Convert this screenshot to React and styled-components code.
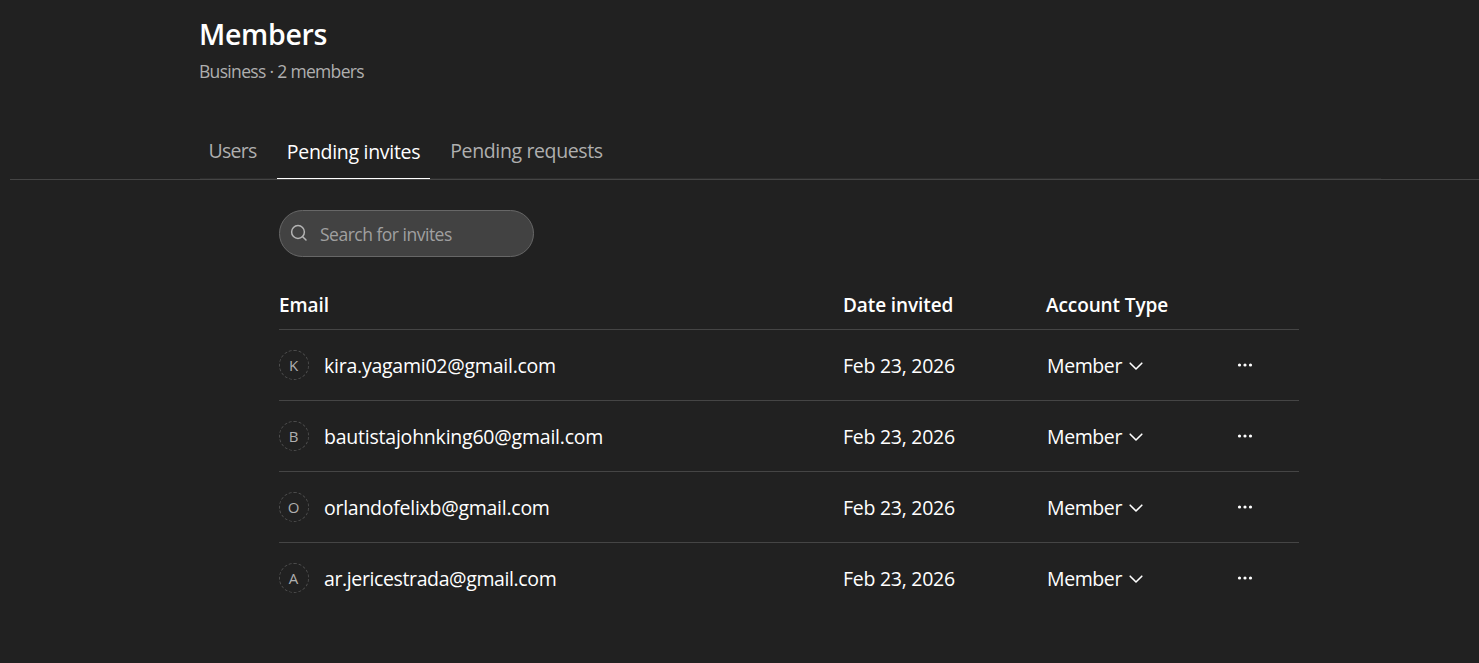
import React from 'react';
import styled, { createGlobalStyle } from 'styled-components';

const GlobalStyle = createGlobalStyle`
  body {
    margin: 0;
    background-color: #212121;
    color: #fff;
    font-family: 'Segoe UI', 'Open Sans', 'Noto Sans', sans-serif;
    font-size: 19.5px;
  }
  * {
    box-sizing: border-box;
  }
`;

const Page = styled.main`
  min-height: 663px;
  padding-left: 10px;
  background-color: #212121;
  overflow: hidden;
`;

const Header = styled.header`
  padding: 13px 0 0 189px;
`;

const Title = styled.h1`
  margin: 0;
  font-size: 28.5px;
  font-weight: 600;
  line-height: 42px;
  letter-spacing: -0.3px;
`;

const Subtitle = styled.p`
  margin: 4px 0 0;
  color: #afafaf;
  font-size: 17.5px;
  line-height: 24px;
  letter-spacing: -0.68px;
`;

const TabBar = styled.nav`
  margin-top: 42px;
  border-bottom: 1px solid #454545;
`;

const TabList = styled.div`
  display: flex;
  gap: 10px;
  width: 1181px;
  height: 54px;
  margin-left: 190px;
  border-bottom: 1px solid #2c2c2c;
`;

const Tab = styled.button`
  flex: none;
  width: ${({ $width }) => $width}px;
  height: 54px;
  padding: ${({ $active }) => ($active ? '0' : '0 2px 2px 0')};
  border: 0;
  border-bottom: 1px solid ${({ $active }) => ($active ? '#fff' : 'transparent')};
  background: none;
  color: ${({ $active }) => ($active ? '#fff' : '#afafaf')};
  font: inherit;
  letter-spacing: ${({ $spacing }) => $spacing}px;
  text-align: center;
  white-space: nowrap;
  cursor: pointer;
`;

const Content = styled.section`
  width: 1020px;
  margin: 30px 0 0 269px;
`;

const SearchBox = styled.label`
  display: flex;
  align-items: center;
  gap: 12px;
  width: 255px;
  height: 47px;
  padding-left: 10px;
  border: 1px solid #676767;
  border-radius: 24px;
  background-color: #424242;
  color: #b4b4b4;
  svg {
    flex: none;
    margin-top: -2px;
  }
`;

const SearchInput = styled.input`
  width: 190px;
  padding: 0;
  border: 0;
  outline: none;
  background: none;
  color: #fff;
  font-family: inherit;
  font-size: 17.5px;
  letter-spacing: -0.5px;
  &::placeholder {
    color: #a0a0a0;
    opacity: 1;
  }
`;

const Row = styled.div`
  display: grid;
  grid-template-columns: 564px 203px 190px 1fr;
  align-items: center;
  height: 71px;
  border-bottom: 1px solid #454545;
  &:last-child {
    border-bottom-color: transparent;
  }
`;

const Cell = styled.div`
  display: flex;
  align-items: center;
  letter-spacing: -0.27px;
  white-space: nowrap;
`;

const HeadRow = styled(Row)`
  height: 73px;
  padding-top: 24px;
  font-size: 19px;
  font-weight: 600;
  ${Cell} {
    letter-spacing: -0.1px;
  }
`;

const Avatar = styled.div`
  display: flex;
  align-items: center;
  justify-content: center;
  width: 30px;
  height: 30px;
  margin-right: 15px;
  padding-right: 1px;
  border: 1px dashed #4f4f4f;
  border-radius: 50%;
  color: #afafaf;
  font-size: 15px;
  letter-spacing: 0;
`;

const Email = styled.span`
  letter-spacing: ${({ $spacing }) => $spacing}px;
`;

const TypeButton = styled.button`
  display: flex;
  align-items: center;
  gap: 7px;
  padding: 0 0 0 1px;
  border: 0;
  background: none;
  color: inherit;
  font: inherit;
  letter-spacing: -0.4px;
  cursor: pointer;
  svg {
    margin-top: 2px;
  }
`;

const MenuButton = styled.button`
  display: flex;
  margin-top: -1px;
  padding: 0;
  border: 0;
  background: none;
  color: #fff;
  cursor: pointer;
`;

const SearchIcon = () => (
  <svg width="18" height="18" viewBox="0 0 18 18" fill="none" stroke="currentColor" strokeWidth="1.5">
    <circle cx="8" cy="8" r="6.4" />
    <path d="M12.7 12.7 16 16" strokeLinecap="round" />
  </svg>
);

const ChevronIcon = () => (
  <svg width="14" height="9" viewBox="0 0 14 9" fill="none" stroke="currentColor" strokeWidth="1.6">
    <path d="M1.2 1.2 7 7l5.8-5.8" strokeLinecap="round" strokeLinejoin="round" />
  </svg>
);

const DotsIcon = () => (
  <svg width="18" height="4" viewBox="0 0 18 4" fill="currentColor">
    <circle cx="3.5" cy="2" r="1.6" />
    <circle cx="9" cy="2" r="1.6" />
    <circle cx="14.5" cy="2" r="1.6" />
  </svg>
);

const tabs = [
  { label: 'Users', width: 67, spacing: -0.7 },
  { label: 'Pending invites', width: 153, spacing: -0.3, active: true },
  { label: 'Pending requests', width: 175, spacing: -0.37 },
];

const invites = [
  { email: 'kira.yagami02@gmail.com', date: 'Feb 23, 2026', type: 'Member', spacing: -0.24 },
  { email: 'bautistajohnking60@gmail.com', date: 'Feb 23, 2026', type: 'Member', spacing: -0.22 },
  { email: 'orlandofelixb@gmail.com', date: 'Feb 23, 2026', type: 'Member', spacing: -0.26 },
  { email: 'ar.jericestrada@gmail.com', date: 'Feb 23, 2026', type: 'Member', spacing: -0.38 },
];

const InviteRow = ({ invite }) => (
  <Row>
    <Cell>
      <Avatar>{invite.email[0].toUpperCase()}</Avatar>
      <Email $spacing={invite.spacing}>{invite.email}</Email>
    </Cell>
    <Cell>{invite.date}</Cell>
    <Cell>
      <TypeButton>
        {invite.type}
        <ChevronIcon />
      </TypeButton>
    </Cell>
    <MenuButton aria-label="More options">
      <DotsIcon />
    </MenuButton>
  </Row>
);

const App = () => (
  <>
    <GlobalStyle />
    <Page>
      <Header>
        <Title>Members</Title>
        <Subtitle>Business · 2 members</Subtitle>
      </Header>
      <TabBar>
        <TabList>
          {tabs.map((tab) => (
            <Tab key={tab.label} $width={tab.width} $spacing={tab.spacing} $active={tab.active}>
              {tab.label}
            </Tab>
          ))}
        </TabList>
      </TabBar>
      <Content>
        <SearchBox>
          <SearchIcon />
          <SearchInput placeholder="Search for invites" />
        </SearchBox>
        <HeadRow>
          <Cell>Email</Cell>
          <Cell>Date invited</Cell>
          <Cell>Account Type</Cell>
        </HeadRow>
        {invites.map((invite) => (
          <InviteRow key={invite.email} invite={invite} />
        ))}
      </Content>
    </Page>
  </>
);

export default App;
